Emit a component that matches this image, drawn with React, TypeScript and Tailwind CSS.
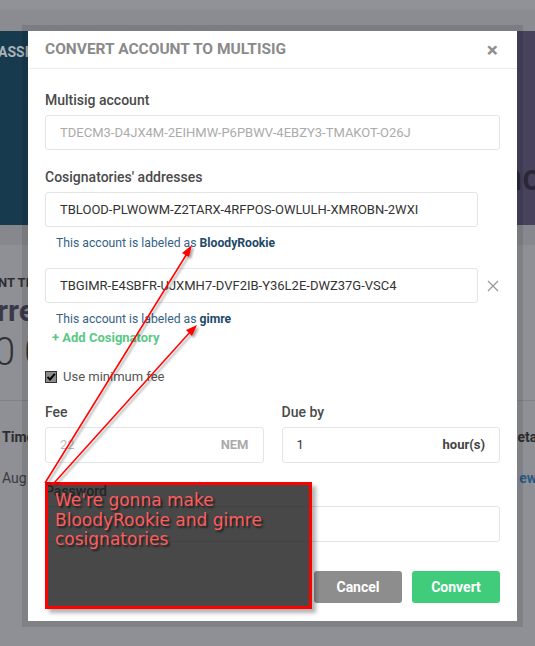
import React from "react";

function Label({ children }: { children: React.ReactNode }) {
  return <div className="text-[14px] leading-[20px] font-medium text-[#4a4a4a]">{children}</div>;
}

function Note({ name }: { name: string }) {
  return (
    <div className="mt-[8px] pl-[11px] text-[12.2px] leading-[16px] text-[#356385]">
      This account is labeled as <span className="font-bold text-[#1e4a69]">{name}</span>
    </div>
  );
}

function Arrows() {
  return (
    <svg className="absolute left-0 top-0 pointer-events-none" width="535" height="646">
      <defs>
        <filter id="sh" x="-20%" y="-20%" width="140%" height="140%">
          <feDropShadow dx="2" dy="2" stdDeviation="1.2" floodColor="#000" floodOpacity="0.35" />
        </filter>
      </defs>
      <g filter="url(#sh)" stroke="#ff0000" strokeWidth="1.5" fill="#ff0000">
        <line x1="45" y1="483" x2="188" y2="252" />
        <polygon points="192,245 182,253 189,257" stroke="none" />
        <line x1="54" y1="483" x2="191" y2="331" />
        <polygon points="197,325 186,330 192,336" stroke="none" />
      </g>
    </svg>
  );
}

export default function App() {
  return (
    <div className="relative h-[646px] w-[535px] overflow-hidden bg-[#8e9095] font-['Roboto',sans-serif]">
      {/* dimmed page behind the dialog */}
      <div className="h-[10px] bg-[#909297]" />
      <div className="h-[21px] bg-[#8a8c91]" />
      <div className="flex h-[194px] justify-between bg-gradient-to-r from-[#163a4e] via-[#2f3d55] to-[#48425d]">
        <div className="-ml-[2px] pt-[11px] text-[14px] font-bold text-[#aab2b9]">ASSIGNED</div>
        <div className="-mr-[6px] flex items-end pb-[20px] text-[36px] font-medium text-[#2b2737]">nc</div>
      </div>
      <div className="h-[20px] bg-[#86888d]" />
      <div className="pt-[29px]">
        <div className="-ml-[2px] text-[13px] leading-[18px] font-bold text-[#2d2e32]">NT TRANSACTIONS</div>
        <div className="-ml-[3px] mt-[2px] text-[30px] leading-[34px] font-bold text-[#3b3949]">rrent</div>
        <div className="-ml-[6px] mt-[4px] text-[38px] leading-[40px] font-light text-[#2f3033]">0 0</div>
        <div className="mt-[28px] border-t border-[#808287]" />
        <div className="mt-[26px] flex justify-between text-[14px] leading-[20px] font-bold text-[#2c2d30]">
          <span className="ml-[2px]">Time</span>
          <span className="-mr-[6px]">etai</span>
        </div>
        <div className="mt-[21px] flex justify-between text-[14px] leading-[20px] text-[#3a3b3f]">
          <span className="ml-[2px]">Aug</span>
          <span className="-mr-[2px] font-bold text-[#2a5a84]">ew</span>
        </div>
      </div>

      {/* dialog */}
      <div className="absolute left-[22px] top-[25px] bg-black/10 p-[6px]">
        <div className="w-[489px] bg-white">
          <div className="flex h-[38px] items-center justify-between border-b border-[#ececec] pl-[17px] pr-[19px]">
            <div className="text-[15.5px] font-bold text-[#8a8a8a]">CONVERT ACCOUNT TO MULTISIG</div>
            <div className="text-[21px] leading-[20px] font-bold text-[#8f8f8f]">×</div>
          </div>
          <div className="px-[17px] pt-[21px] pb-[18px]">
            <Label>Multisig account</Label>
            <div className="mt-[5px] flex h-[35px] items-center rounded-[3px] border border-[#e4e4e4] pl-[14px] text-[13px] text-[#ababab]">
              TDECM3-D4JX4M-2EIHMW-P6PBWV-4EBZY3-TMAKOT-O26J
            </div>

            <div className="mt-[17px]">
              <Label>Cosignatories' addresses</Label>
            </div>
            <div className="mt-[5px] flex h-[35px] w-[433px] items-center rounded-[3px] border border-[#e4e4e4] pl-[14px] text-[13px] text-[#333]">
              TBLOOD-PLWOWM-Z2TARX-4RFPOS-OWLULH-XMROBN-2WXI
            </div>
            <Note name="BloodyRookie" />

            <div className="mt-[17px] flex items-center">
              <div className="flex h-[35px] w-[433px] items-center rounded-[3px] border border-[#e4e4e4] pl-[14px] text-[13px] text-[#333]">
                TBGIMR-E4SBFR-UJXMH7-DVF2IB-Y36L2E-DWZ37G-VSC4
              </div>
              <svg className="ml-[9px]" width="12" height="12" viewBox="0 0 12 12">
                <path d="M1 1L11 11M11 1L1 11" stroke="#9a9a9a" strokeWidth="1.3" />
              </svg>
            </div>
            <Note name="gimre" />
            <div className="mt-[3px] pl-[7px] text-[13px] leading-[16px] font-bold text-[#5bc886]">+ Add Cosignatory</div>

            <div className="mt-[21px] flex h-[20px] items-center gap-[6px]">
              <div className="flex h-[12px] w-[12px] items-center justify-center border border-[#333] bg-[#8c8c8c]">
                <svg width="10" height="10" viewBox="0 0 10 10">
                  <path d="M1.5 5L4 7.5L8.8 1.8" stroke="#000" strokeWidth="2" fill="none" />
                </svg>
              </div>
              <span className="text-[13px] text-[#555]">Use minimum fee</span>
            </div>

            <div className="mt-[15px] flex gap-[18px]">
              <div className="flex-1">
                <Label>Fee</Label>
                <div className="mt-[5px] flex h-[36px] items-center justify-between rounded-[3px] border border-[#e4e4e4] pl-[14px] pr-[14px] text-[13px]">
                  <span className="text-[#bcbcbc]">22</span>
                  <span className="font-bold text-[#aaa]">NEM</span>
                </div>
              </div>
              <div className="flex-1">
                <Label>Due by</Label>
                <div className="mt-[5px] flex h-[36px] items-center justify-between rounded-[3px] border border-[#e4e4e4] pl-[14px] pr-[14px] text-[13px]">
                  <span className="text-[#333]">1</span>
                  <span className="font-bold text-[#444]">hour(s)</span>
                </div>
              </div>
            </div>

            <div className="mt-[18px]">
              <Label>Password</Label>
            </div>
            <div className="mt-[5px] h-[36px] rounded-[3px] border border-[#e4e4e4]" />

            <div className="mt-[29px] flex justify-end gap-[10px]">
              <button className="h-[32px] w-[88px] rounded-[3px] bg-[#8d8d8d] text-[14px] font-bold text-white">Cancel</button>
              <button className="h-[32px] w-[88px] rounded-[3px] bg-[#41cc7c] text-[14px] font-bold text-white">Convert</button>
            </div>
          </div>
        </div>
      </div>

      {/* annotation */}
      <div className="absolute left-[45px] top-[482px] h-[127px] w-[267px] border-[3px] border-[#ff0000] bg-[#1a1a1a]/80 px-[7px] pt-[6px] shadow-[4px_4px_4px_rgba(0,0,0,0.3)]">
        <div className="font-['DejaVu_Sans',sans-serif] text-[17px] leading-[19.5px] text-[#ff5c5c] [text-shadow:2px_2px_2px_rgba(0,0,0,0.6)]">
          We're gonna make BloodyRookie and gimre cosignatories
        </div>
      </div>
      <Arrows />
    </div>
  );
}
